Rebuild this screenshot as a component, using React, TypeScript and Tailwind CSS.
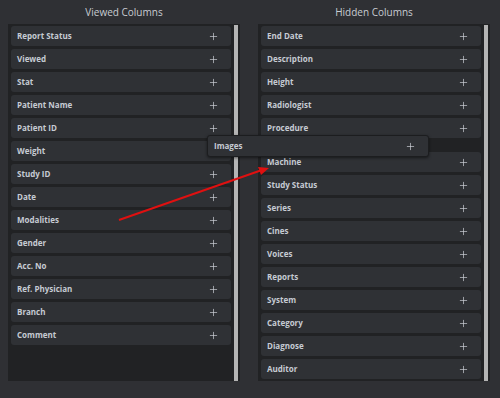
import { Plus } from 'lucide-react';

const viewed = [
    'Report Status', 'Viewed', 'Stat', 'Patient Name', 'Patient ID', 'Weight', 'Study ID',
    'Date', 'Modalities', 'Gender', 'Acc. No', 'Ref. Physician', 'Branch', 'Comment',
];

const hiddenTop = ['End Date', 'Description', 'Height', 'Radiologist', 'Procedure'];
const hiddenBottom = [
    'Machine', 'Study Status', 'Series', 'Cines', 'Voices', 'Reports', 'System',
    'Category', 'Diagnose', 'Auditor',
];

function ColumnItem({ label }: { label: string }) {
    return (
        <div className="flex h-[20px] shrink-0 items-center justify-between rounded-[3px] bg-[#2f3135] pl-[6px] pr-[12px]">
            <span className="text-[8px] font-bold text-[#c6cbd3]">{label}</span>
            <Plus size={11} strokeWidth={1.5} className="text-[#cdd1d8]" />
        </div>
    );
}

function Panel({ title, children }: { title: string; children: React.ReactNode }) {
    return (
        <div className="flex w-[232px] flex-col">
            <h2 className="flex h-[24px] items-center justify-center text-[10px] text-[#c8ccd2]">{title}</h2>
            <div className="flex h-[357px] overflow-hidden bg-[#212224]">
                <div className="flex flex-1 flex-col gap-[3px] px-[3px] pt-[2px]">{children}</div>
                <div className="mt-[1px] w-[4px] bg-[#b4b4b4]" />
                <div className="w-[2px]" />
            </div>
        </div>
    );
}

export default function App() {
    return (
        <div
            className="relative h-[398px] w-[500px] overflow-hidden bg-[#2f3034]"
            style={{ fontFamily: '"Open Sans", "Liberation Sans", sans-serif' }}
        >
            <div className="flex justify-between pl-[8px] pr-[10px]">
                <Panel title="Viewed Columns">
                    {viewed.map((c) => (
                        <ColumnItem key={c} label={c} />
                    ))}
                </Panel>
                <Panel title="Hidden Columns">
                    {hiddenTop.map((c) => (
                        <ColumnItem key={c} label={c} />
                    ))}
                    <div className="-my-[3px] h-[14px] shrink-0" />
                    {hiddenBottom.map((c) => (
                        <ColumnItem key={c} label={c} />
                    ))}
                </Panel>
            </div>

            {/* dragged item */}
            <div className="absolute left-[207px] top-[135px] flex h-[22px] w-[222px] items-center justify-between rounded-[3px] border border-[#1c1d1f] bg-[#2f3135] pl-[6px] pr-[12px] shadow-[0_1px_3px_rgba(0,0,0,0.5)]">
                <span className="text-[8px] font-bold text-[#c6cbd3]">Images</span>
                <Plus size={11} strokeWidth={1.5} className="text-[#cdd1d8]" />
            </div>

            {/* drag arrow */}
            <svg className="pointer-events-none absolute left-0 top-0" width="500" height="398">
                <line x1="119" y1="220" x2="262" y2="170" stroke="#e01010" strokeWidth="2" />
                <polygon points="269,168 258,167 261,175" fill="#e01010" />
            </svg>
        </div>
    );
}
